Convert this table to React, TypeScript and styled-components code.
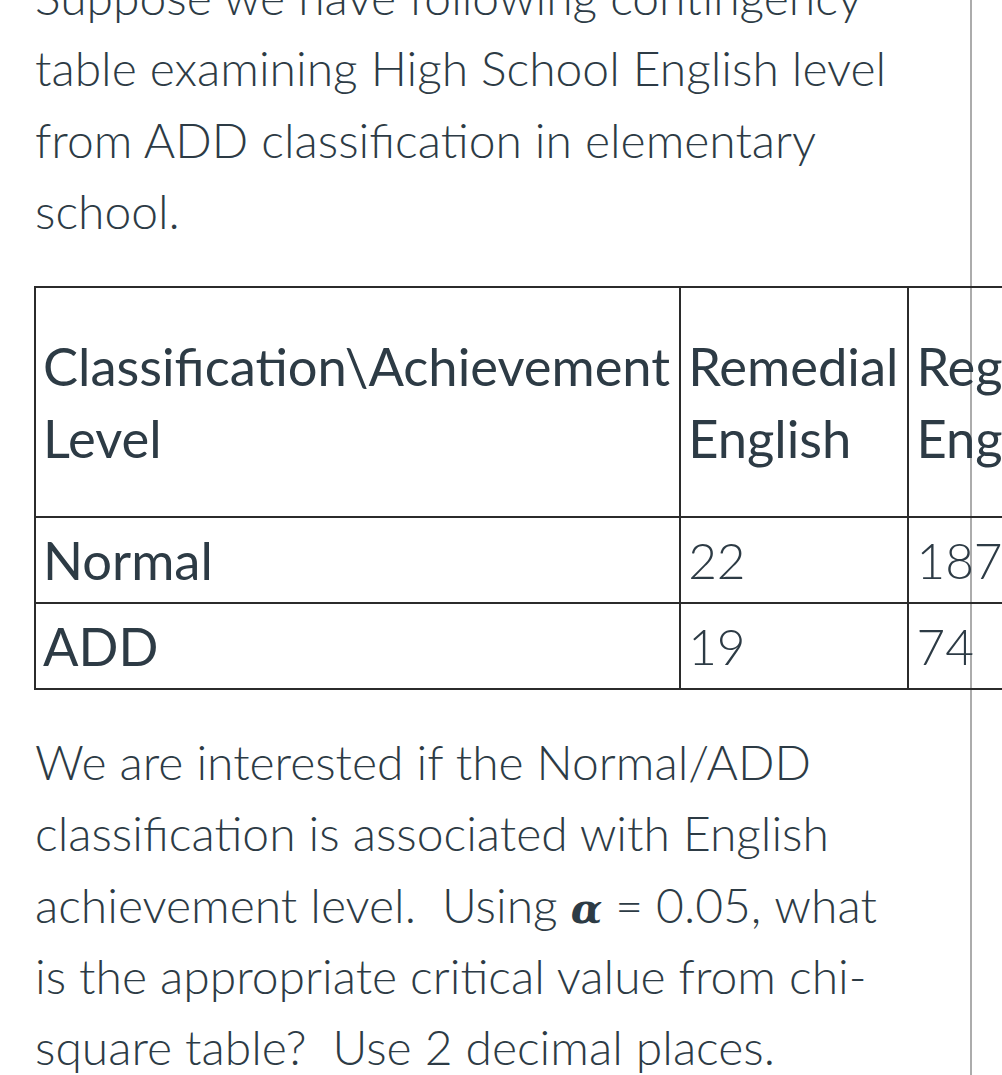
import styled, { createGlobalStyle } from 'styled-components'

const GlobalStyle = createGlobalStyle`
  html, body {
    margin: 0;
    padding: 0;
    overflow: hidden;
    background: #ffffff;
  }
  body {
    font-family: Lato, "Noto Sans", sans-serif;
    color: #2d3b45;
  }
`

interface Row {
  label: string
  values: string[]
}

const headers = ['Remedial English', 'Regular English', 'Advanced Placement English']

const rows: Row[] = [
  { label: 'Normal', values: ['22', '187', '10'] },
  { label: 'ADD', values: ['19', '74', '2'] }
]

const Page = styled.div`
  width: 870px;
  min-height: 1200px;
  padding: 0 65px 0 35px;
  border-right: 2px solid #acacac;
  font-size: 48px;
  line-height: 71.25px;
  font-weight: 300;
`

// the question is scrolled a little, its first line sits under the top edge
const Scroller = styled.div`
  margin-top: -39px;
`

const Paragraph = styled.p`
  margin: 0 0 36px;
`

const Table = styled.table`
  border-collapse: collapse;
  border: 2px solid #2b2b2b;
  margin: 40px 0 36px -1px;
  line-height: 72px;
`

const HeadCell = styled.th`
  border: 2px solid #2b2b2b;
  padding: 6px 9px 6px 7px;
  font-size: 52.5px;
  font-weight: 400;
  text-align: left;
  vertical-align: middle;
`

const Cell = styled.td<{ $label?: boolean }>`
  border: 2px solid #2b2b2b;
  padding: 6px 9px 6px 7px;
  font-size: ${p => (p.$label ? '52.5px' : '49.5px')};
  font-weight: ${p => (p.$label ? 400 : 300)};
  text-align: left;
  vertical-align: middle;
`

const Alpha = styled.span`
  font-family: "DejaVu Serif", "Liberation Serif", serif;
  font-style: italic;
  font-weight: 700;
  font-size: 41px;
  line-height: 0;
  color: #2d3b45;
`

export default function App() {
  return (
    <>
      <GlobalStyle />
      <Page>
        <Scroller>
          <Paragraph>
            Suppose we have following contingency table examining High School English level from ADD
            classification in elementary school.
          </Paragraph>
          <Table>
            <thead>
              <tr>
                <HeadCell>Classification\Achievement Level</HeadCell>
                {headers.map(h => (
                  <HeadCell key={h}>{h}</HeadCell>
                ))}
              </tr>
            </thead>
            <tbody>
              {rows.map(row => (
                <tr key={row.label}>
                  <Cell $label>{row.label}</Cell>
                  {row.values.map((v, i) => (
                    <Cell key={i}>{v}</Cell>
                  ))}
                </tr>
              ))}
            </tbody>
          </Table>
          <Paragraph>
            We are interested if the Normal/ADD classification is associated with English achievement
            level.{'\u00a0 '}Using <Alpha>α</Alpha> = 0.05, what is the appropriate critical value from
            chi-square table?{'\u00a0 '}Use 2 decimal places.
          </Paragraph>
        </Scroller>
      </Page>
    </>
  )
}
